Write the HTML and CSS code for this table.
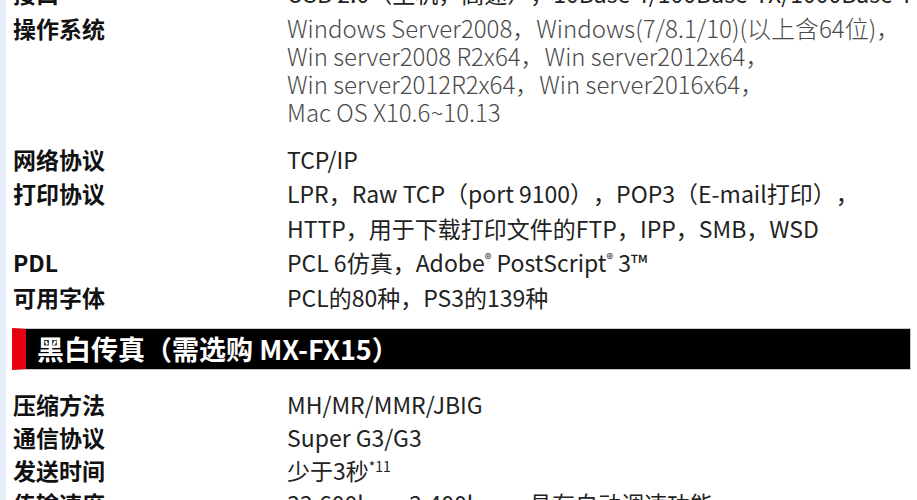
FILE: index.html
```html
<!DOCTYPE html>
<html lang="zh-CN">
<head>
  <meta charset="UTF-8">
  <title>规格参数</title>
  <link rel="stylesheet" href="styles.css">
</head>
<body>
  <main class="spec-page">
    <!-- 网络 / 打印 -->
    <section class="spec-table">
      <div class="spec-row">
        <div class="spec-label">接口</div>
        <div class="spec-value nowrap">USB 2.0（主机，高速），10Base-T/100Base-TX/1000Base-T</div>
      </div>
      <div class="spec-row os-row">
        <div class="spec-label">操作系统</div>
        <div class="spec-value os-value">
          Windows Server2008，Windows(7/8.1/10)(以上含64位)，<br>
          Win server2008 R2x64，Win server2012x64，<br>
          Win server2012R2x64，Win server2016x64，<br>
          Mac OS X10.6~10.13
        </div>
      </div>
      <div class="spec-row">
        <div class="spec-label">网络协议</div>
        <div class="spec-value">TCP/IP</div>
      </div>
      <div class="spec-row">
        <div class="spec-label">打印协议</div>
        <div class="spec-value">LPR，Raw TCP（port 9100），POP3（E-mail打印），<br>HTTP，用于下载打印文件的FTP，IPP，SMB，WSD</div>
      </div>
      <div class="spec-row">
        <div class="spec-label">PDL</div>
        <div class="spec-value">PCL 6仿真，Adobe<sup>®</sup> PostScript<sup>®</sup> 3™</div>
      </div>
      <div class="spec-row">
        <div class="spec-label">可用字体</div>
        <div class="spec-value">PCL的80种，PS3的139种</div>
      </div>
    </section>

    <h2 class="section-title">黑白传真（需选购 MX-FX15）</h2>

    <!-- 传真 -->
    <section class="spec-table fax-table">
      <div class="spec-row">
        <div class="spec-label">压缩方法</div>
        <div class="spec-value">MH/MR/MMR/JBIG</div>
      </div>
      <div class="spec-row">
        <div class="spec-label">通信协议</div>
        <div class="spec-value">Super G3/G3</div>
      </div>
      <div class="spec-row">
        <div class="spec-label">发送时间</div>
        <div class="spec-value">少于3秒<span class="note">*11</span></div>
      </div>
      <div class="spec-row">
        <div class="spec-label">传输速度</div>
        <div class="spec-value">33,600bps~2,400bps，具有自动调速功能</div>
      </div>
    </section>
  </main>
</body>
</html>
```

FILE: styles.css
```css
/* Reset */
* {
  margin: 0;
  padding: 0;
  box-sizing: border-box;
}

body {
  font-family: "Noto Sans CJK SC", "Noto Sans", sans-serif;
  color: #1a1a1a;
  background: #fff;
  border-left: 6px solid #e4edf8; /* light blue page edge */
  overflow: hidden;
  text-spacing-trim: space-all;
}

.spec-page {
  margin-top: -24px; /* page is scrolled, first row is cut off */
  padding: 0 6px 0 6px;
}

/* Spec rows */
.spec-table {
  padding-left: 1px;
}

.spec-row {
  display: grid;
  grid-template-columns: 274px 1fr;
  font-size: 23px;
  line-height: 34.5px;
}

.spec-label {
  font-weight: 700;
  color: #111;
}

.spec-value {
  color: #222;
}

.nowrap {
  white-space: nowrap;
  overflow: hidden;
}

.spec-value sup {
  font-size: 14px;
  vertical-align: 8px;
  line-height: 0;
}

/* Operating system block uses lighter text */
.os-row {
  line-height: 34px;
  margin-bottom: 16px;
}

.os-value {
  padding-top: 3px;
  line-height: 28px;
  font-size: 24px;
  color: #4a4a4a;
  font-weight: 300;
}

/* Section header bar */
.section-title {
  margin: 14px 0 18px;
  height: 42px;
  background: #000;
  border: 1px solid #c8c8c8;
  border-left: 14px solid #e60012;
  color: #fff;
  font-size: 27px;
  font-weight: 700;
  line-height: 40px;
  padding-left: 11px;
}

.fax-table .spec-row {
  line-height: 33px;
}

.note {
  font-size: 14px;
  vertical-align: 8px;
  line-height: 0;
}
```
